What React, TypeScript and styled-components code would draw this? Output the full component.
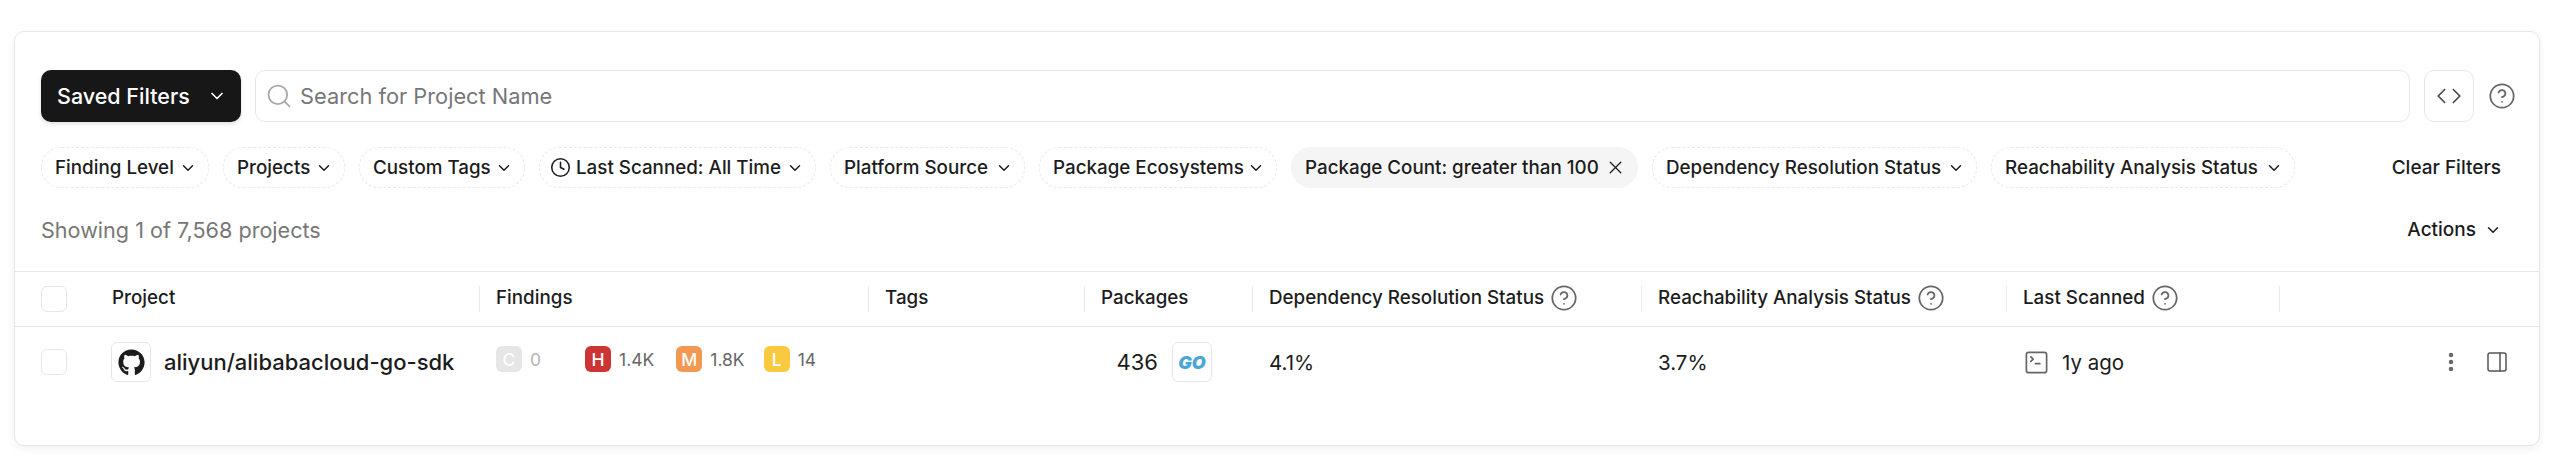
import styled, { createGlobalStyle } from 'styled-components';
import { ChevronDown, CircleHelp, Clock, Code, Search, PanelRight, EllipsisVertical, SquareTerminal, X } from 'lucide-react';
import { FaGithub } from 'react-icons/fa';

const filters = [
  { label: 'Finding Level', width: 168 },
  { label: 'Projects', width: 122 },
  { label: 'Custom Tags', width: 166 },
  { label: 'Last Scanned: All Time', width: 277, clock: true },
  { label: 'Platform Source', width: 195 },
  { label: 'Package Ecosystems', width: 238 },
  { label: 'Package Count: greater than 100', width: 347, active: true },
  { label: 'Dependency Resolution Status', width: 325 },
  { label: 'Reachability Analysis Status', width: 304 },
];

const severities = [
  { letter: 'C', value: '0', color: '#e6e6e6', muted: true, gap: 44 },
  { letter: 'H', value: '1.4K', color: '#cc3533', gap: 22 },
  { letter: 'M', value: '1.8K', color: '#f39850', gap: 19 },
  { letter: 'L', value: '14', color: '#f9c940', gap: 0 },
];

const GRID = '81px 383px 389px 216px 168px 389px 365px 273px 1fr';

const App = () => {
  return (
    <Page>
      <GlobalStyle />
      <Card>
        <Toolbar>
          <SavedButton>
            Saved Filters
            <ChevronDown size={20} strokeWidth={2} />
          </SavedButton>
          <SearchBox>
            <Search size={28} strokeWidth={1.5} color="#a8a8a8" />
            <SearchPlaceholder>Search for Project Name</SearchPlaceholder>
          </SearchBox>
          <CodeButton>
            <Code size={26} strokeWidth={1.5} />
          </CodeButton>
          <HelpSlot>
            <CircleHelp size={28} strokeWidth={1.5} color="#666" />
          </HelpSlot>
        </Toolbar>
        <FilterRow>
          {filters.map((f) => (
            <Chip key={f.label} $active={f.active} $width={f.width}>
              <ChipLabel>
                {f.clock && <ClockIcon size={21} strokeWidth={1.75} />}
                {f.label}
              </ChipLabel>
              {f.active ? <X size={21} strokeWidth={1.5} /> : <ChevronDown size={18} strokeWidth={2} />}
            </Chip>
          ))}
          <ClearFilters>Clear Filters</ClearFilters>
        </FilterRow>
        <SummaryRow>
          <Summary>Showing 1 of 7,568 projects</Summary>
          <Actions>
            Actions
            <ChevronDown size={18} strokeWidth={2} />
          </Actions>
        </SummaryRow>
        <HeaderRow>
          <CheckCell>
            <Checkbox />
          </CheckCell>
          <HeadCell>Project</HeadCell>
          <HeadCell $line>Findings</HeadCell>
          <HeadCell $line>Tags</HeadCell>
          <HeadCell $line>Packages</HeadCell>
          <HeadCell $line>
            Dependency Resolution Status
            <CircleHelp size={28} strokeWidth={1.5} color="#666" />
          </HeadCell>
          <HeadCell $line>
            Reachability Analysis Status
            <CircleHelp size={28} strokeWidth={1.5} color="#666" />
          </HeadCell>
          <HeadCell $line>
            Last Scanned
            <CircleHelp size={28} strokeWidth={1.5} color="#666" />
          </HeadCell>
          <HeadCell $line />
        </HeaderRow>
        <DataRow>
          <CheckCell>
            <Checkbox />
          </CheckCell>
          <ProjectCell>
            <LogoBox>
              <FaGithub size={27} color="#1c1c1c" />
            </LogoBox>
            aliyun/alibabacloud-go-sdk
          </ProjectCell>
          <FindingsCell>
            {severities.map((s) => (
              <Severity key={s.letter} $gap={s.gap}>
                <SeverityBadge $color={s.color}>{s.letter}</SeverityBadge>
                <SeverityValue $muted={s.muted}>{s.value}</SeverityValue>
              </Severity>
            ))}
          </FindingsCell>
          <div />
          <PackagesCell>
            436
            <LogoBox>
              <GoMark>GO</GoMark>
            </LogoBox>
          </PackagesCell>
          <ValueCell>4.1%</ValueCell>
          <ValueCell>3.7%</ValueCell>
          <ValueCell>
            <SquareTerminal size={27} strokeWidth={1.5} color="#666" />
            1y ago
          </ValueCell>
          <RowActions>
            <EllipsisVertical size={24} strokeWidth={2.5} color="#666" />
            <PanelRight size={24} strokeWidth={1.5} color="#555" />
          </RowActions>
        </DataRow>
      </Card>
    </Page>
  );
};

const GlobalStyle = createGlobalStyle`
  html, body {
    margin: 0;
    padding: 0;
    background: #ffffff;
    font-family: Inter, "Liberation Sans", sans-serif;
    color: #1c1c1c;
  }
`;
const Page = styled.div`
  box-sizing: border-box;
  width: 2564px;
  height: 468px;
  padding: 31px 24px 0 14px;
`;
const Card = styled.div`
  box-sizing: border-box;
  height: 415px;
  border: 1.5px solid #e6e6e6;
  border-radius: 10px;
  box-shadow: 0 3px 8px rgba(0, 0, 0, 0.06);
  background: #fff;
`;
const Toolbar = styled.div`
  display: flex;
  align-items: center;
  gap: 14px;
  padding: 38px 0 0 26px;
`;
const SavedButton = styled.button`
  display: flex;
  align-items: center;
  justify-content: space-between;
  box-sizing: border-box;
  width: 200px;
  height: 52px;
  padding: 0 14px 0 16px;
  background: #171717;
  color: #fff;
  border: none;
  border-radius: 10px;
  font: 500 21.5px Inter, sans-serif;
  white-space: nowrap;
  box-shadow: 0 2px 4px rgba(0, 0, 0, 0.12);
`;
const SearchBox = styled.div`
  display: flex;
  align-items: center;
  gap: 7px;
  box-sizing: border-box;
  width: 2155px;
  height: 52px;
  padding: 0 9px;
  border: 1.5px solid #e6e6e6;
  border-radius: 10px;
`;
const SearchPlaceholder = styled.span`
  font-size: 21.8px;
  color: #777;
`;
const CodeButton = styled.div`
  display: flex;
  align-items: center;
  justify-content: center;
  box-sizing: border-box;
  width: 50px;
  height: 52px;
  border: 1.5px solid #e6e6e6;
  border-radius: 10px;
  color: #444;
`;
const HelpSlot = styled.div`
  display: flex;
`;
const FilterRow = styled.div`
  display: flex;
  align-items: center;
  gap: 14px;
  padding: 25px 0 0 26px;
`;
const Chip = styled.div<{ $active?: boolean; $width: number }>`
  display: flex;
  align-items: center;
  justify-content: space-between;
  box-sizing: border-box;
  width: ${(p) => p.$width}px;
  height: 41px;
  padding: 0 11px 0 13px;
  border: 1.5px ${(p) => (p.$active ? 'solid #f5f5f5' : 'dashed #e8e8e8')};
  background: ${(p) => (p.$active ? '#f5f5f5' : '#fff')};
  border-radius: 20px;
  font-size: 18.8px;
  font-weight: 500;
  white-space: nowrap;
`;
const ChipLabel = styled.span`
  display: flex;
  align-items: center;
  gap: 5px;
`;
const ClockIcon = styled(Clock)`
  margin-left: -3px;
`;
const ClearFilters = styled.div`
  margin-left: auto;
  padding-right: 38px;
  font-size: 19px;
  font-weight: 500;
`;
const SummaryRow = styled.div`
  display: flex;
  align-items: center;
  justify-content: space-between;
  height: 83px;
  padding: 0 37px 0 26px;
`;
const Summary = styled.span`
  font-size: 21.6px;
  color: #777;
`;
const Actions = styled.div`
  display: flex;
  align-items: center;
  gap: 8px;
  font-size: 19px;
  font-weight: 500;
`;
const HeaderRow = styled.div`
  display: grid;
  grid-template-columns: ${GRID};
  align-items: center;
  height: 54px;
  border-top: 1.5px solid #e6e6e6;
  border-bottom: 1.5px solid #e6e6e6;
`;
const CheckCell = styled.div`
  padding-left: 26px;
  display: flex;
`;
const Checkbox = styled.div`
  box-sizing: border-box;
  width: 26px;
  height: 26px;
  border: 1.5px solid #e6e6e6;
  border-radius: 6px;
`;
const HeadCell = styled.div<{ $line?: boolean }>`
  display: flex;
  align-items: center;
  gap: 6px;
  box-sizing: border-box;
  height: 26px;
  margin-top: -1px;
  padding-left: ${(p) => (p.$line ? '16px' : '16px')};
  border-left: ${(p) => (p.$line ? '1.5px solid #e8e8e8' : 'none')};
  font-size: 18.8px;
  font-weight: 500;
  line-height: 22px;
  padding-bottom: 2px;
  white-space: nowrap;
`;
const DataRow = styled.div`
  display: grid;
  grid-template-columns: ${GRID};
  align-items: center;
  padding-top: 15px;
`;
const ProjectCell = styled.div`
  display: flex;
  align-items: center;
  gap: 13px;
  padding-left: 15px;
  font-size: 22px;
  font-weight: 500;
  white-space: nowrap;
`;
const LogoBox = styled.div`
  display: flex;
  align-items: center;
  justify-content: center;
  box-sizing: border-box;
  width: 40px;
  height: 40px;
  border: 1.5px solid #e6e6e6;
  border-radius: 6px;
`;
const FindingsCell = styled.div`
  display: flex;
  padding: 0 0 6px 17px;
`;
const Severity = styled.div<{ $gap: number }>`
  display: flex;
  align-items: center;
  gap: 8px;
  margin-right: ${(p) => p.$gap}px;
`;
const SeverityBadge = styled.span<{ $color: string }>`
  display: flex;
  align-items: center;
  justify-content: center;
  width: 26px;
  height: 26px;
  border-radius: 6px;
  background: ${(p) => p.$color};
  color: #fff;
  font-size: 17.5px;
  font-weight: 500;
`;
const SeverityValue = styled.span<{ $muted?: boolean }>`
  font-size: 17.5px;
  color: ${(p) => (p.$muted ? '#b5b5b5' : '#666')};
`;
const PackagesCell = styled.div`
  display: flex;
  align-items: center;
  justify-content: flex-end;
  gap: 14px;
  padding-right: 40px;
  font-size: 22px;
`;
const GoMark = styled.span`
  color: #4ba6d8;
  font-size: 18px;
  font-weight: 900;
  font-style: italic;
`;
const ValueCell = styled.div`
  display: flex;
  align-items: center;
  gap: 12px;
  padding-left: 17px;
  font-size: 20.5px;
`;
const RowActions = styled.div`
  display: flex;
  align-items: center;
  justify-content: flex-end;
  gap: 22px;
  padding-right: 30px;
`;

export default App;
